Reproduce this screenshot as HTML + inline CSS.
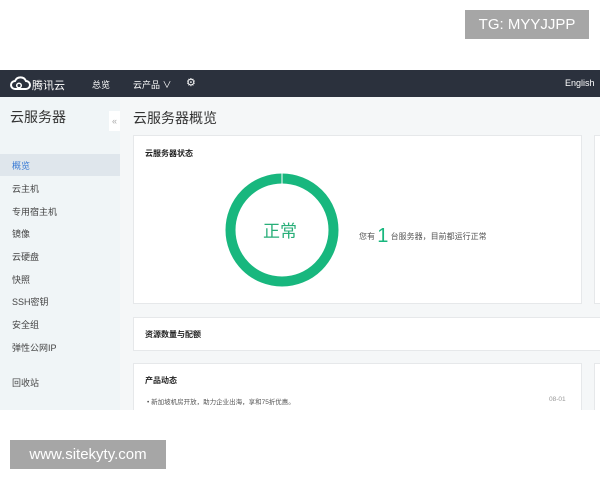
<!DOCTYPE html>
<html><head><meta charset="utf-8"><style>
body{margin:0;width:600px;height:480px;background:#fff;position:relative;overflow:hidden;font-family:"Liberation Sans","Noto Sans CJK SC",sans-serif}
.a{position:absolute}
.nav{left:0;top:70px;width:600px;height:27px;background:#2b313d;color:#fff;font-size:10px}
.side{left:0;top:97px;width:120px;height:313px;background:#f0f5f7;overflow:hidden}
.main{left:120px;top:97px;width:480px;height:313px;background:#f5f7f8;overflow:hidden}
.card{background:#fff;border:1px solid #e6e8ea}
.mi{left:12px;font-size:9px;color:#444}
.tag{background:#a6a6a6;color:#fff;font-size:15px;text-align:center}
</style></head><body>
<div class="a nav">
 <svg class="a" style="left:10px;top:6px" width="22" height="15" viewBox="0 0 22 15"><path d="M5 13a4 4 0 0 1 0-8a6 6 0 0 1 11 0a4 4 0 0 1 0 8z" fill="none" stroke="#fff" stroke-width="2"/><circle cx="9" cy="9.5" r="2.3" fill="none" stroke="#fff" stroke-width="1.5"/></svg>
 <span class="a" style="left:32px;top:7px;font-size:11px">腾讯云</span>
 <span class="a" style="left:92px;top:8px;font-size:9px">总览</span>
 <span class="a" style="left:133px;top:8px;font-size:9px">云产品 ∨</span>
 <span class="a" style="left:186px;top:6px;font-size:11px">⚙</span>
 <span class="a" style="left:565px;top:8px;font-size:9px">English</span>
</div>
<div class="a side">
 <div class="a" style="left:10px;top:10px;font-size:14px;color:#333">云服务器</div>
 <div class="a" style="left:109px;top:14px;width:11px;height:20px;background:#fff;color:#aaa;font-size:9px;text-align:center;line-height:20px">«</div>
 <div class="a" style="left:0;top:57px;width:120px;height:22px;background:#dfe6ec"></div>
 <div class="a mi" style="top:62px;color:#3a7bd5">概览</div>
 <div class="a mi" style="top:85px">云主机</div>
 <div class="a mi" style="top:108px">专用宿主机</div>
 <div class="a mi" style="top:130px">镜像</div>
 <div class="a mi" style="top:153px">云硬盘</div>
 <div class="a mi" style="top:176px">快照</div>
 <div class="a mi" style="top:198px">SSH密钥</div>
 <div class="a mi" style="top:221px">安全组</div>
 <div class="a mi" style="top:244px">弹性公网IP</div>
 <div class="a mi" style="top:279px">回收站</div>
</div>
<div class="a main">
 <div class="a" style="left:13px;top:11px;font-size:14px;color:#333">云服务器概览</div>
 <div class="a card" style="left:13px;top:38px;width:447px;height:167px">
  <div class="a" style="left:11px;top:12px;font-size:8px;font-weight:bold;color:#222">云服务器状态</div>
  <svg class="a" style="left:90px;top:36px" width="116" height="116"><circle cx="58" cy="58" r="51.5" fill="none" stroke="#18b77e" stroke-width="10"/><line x1="58" y1="0" x2="58" y2="12" stroke="#fff" stroke-width="1"/></svg>
  <div class="a" style="left:129px;top:81px;font-size:17px;color:#27ae78">正常</div>
  <div class="a" style="left:225px;top:89px;font-size:8px;color:#555">您有 <span style="font-size:20px;color:#18b77e;vertical-align:-3px">1</span> 台服务器，目前都运行正常</div>
 </div>
 <div class="a card" style="left:474px;top:38px;width:20px;height:167px"></div>
 <div class="a card" style="left:13px;top:220px;width:470px;height:32px">
  <div class="a" style="left:11px;top:11px;font-size:8px;font-weight:bold;color:#222">资源数量与配额</div>
 </div>
 <div class="a card" style="left:13px;top:266px;width:447px;height:60px">
  <div class="a" style="left:11px;top:11px;font-size:8px;font-weight:bold;color:#222">产品动态</div>
  <div class="a" style="left:13px;top:32px;font-size:6.5px;color:#555">• 新加坡机房开放，助力企业出海，享和75折优惠。</div>
  <div class="a" style="left:415px;top:32px;font-size:6.5px;color:#999">08-01</div>
 </div>
 <div class="a card" style="left:474px;top:266px;width:20px;height:60px"></div>
</div>
<div class="a tag" style="left:465px;top:10px;width:124px;height:29px;line-height:29px">TG: MYYJJPP</div>
<div class="a tag" style="left:10px;top:440px;width:156px;height:29px;line-height:29px">www.sitekyty.com</div>
</body></html>
